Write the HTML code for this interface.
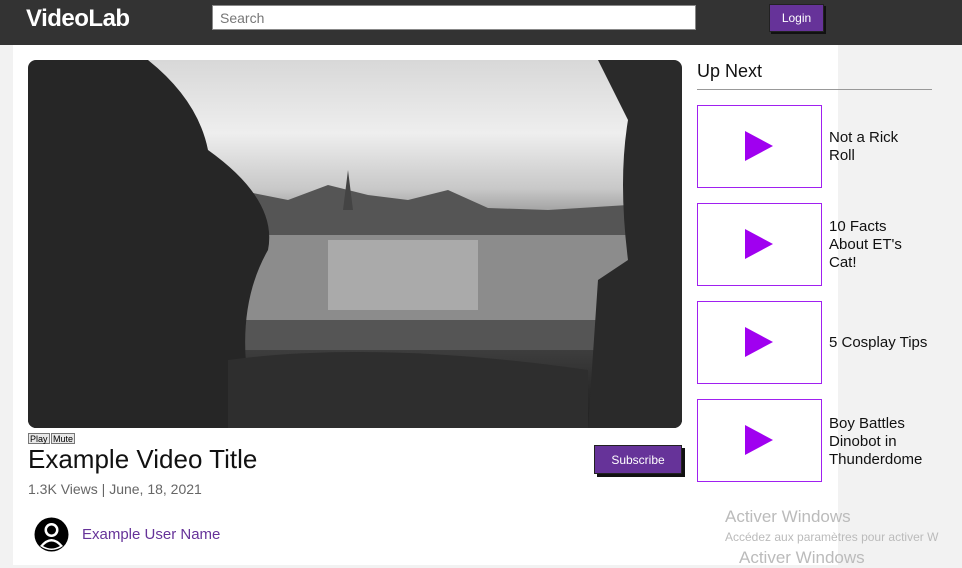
<!DOCTYPE html>
<html><head><style>
*{margin:0;padding:0;box-sizing:border-box}
body{width:962px;height:565px;overflow:hidden;background:#f2f2f2;font-family:"Liberation Sans",sans-serif;position:relative}
.hdr{position:absolute;left:0;top:0;width:962px;height:45px;background:#333}
.logo{position:absolute;left:26px;top:5px;color:#fff;font-size:24px;font-weight:bold;letter-spacing:-0.5px}
.search{position:absolute;left:212px;top:5px;width:484px;height:25px;background:#fff;border:1px solid #888;font-size:14px;color:#777;padding:4px 7px}
.login{position:absolute;left:769px;top:4px;width:55px;height:28px;background:#663399;border:1px solid #222;box-shadow:2px 2px 0 #111;color:#fff;font-size:12px;text-align:center;line-height:27px}
.main{position:absolute;left:13px;top:45px;width:825px;height:520px;background:#fff}
.vid{position:absolute;left:28px;top:60px;width:654px;height:368px;border-radius:8px;overflow:hidden;
background:linear-gradient(180deg,#d8d8d8 0%,#eee 20%,#c8c8c8 35%,#8a8a8a 45%,#6a6a6a 55%,#777 65%,#444 75%,#2a2a2a 90%,#222 100%)}
.ctl{position:absolute;top:433px;font-size:9px;border:1px solid #777;background:#e8e8e8;padding:0 1px;height:11px;line-height:10px}
.title{position:absolute;left:28px;top:444px;font-size:26px;color:#111}
.meta{position:absolute;left:28px;top:481px;font-size:14px;color:#666}
.sub{position:absolute;left:594px;top:445px;width:88px;height:29px;background:#663399;border:1px solid #222;box-shadow:3px 3px 0 #111;color:#fff;font-size:12px;text-align:center;line-height:28px}
.user{position:absolute;left:82px;top:526px;font-size:15px;color:#663399}
.upn{position:absolute;left:697px;top:61px;font-size:18px;color:#111}
.line{position:absolute;left:697px;top:89px;width:235px;height:1px;background:#999}
.th{position:absolute;left:697px;width:125px;height:83px;border:1px solid #a020f0;background:#fff}
.th:after{content:"";position:absolute;left:47px;top:25px;border-left:28px solid #a000f0;border-top:15px solid transparent;border-bottom:15px solid transparent}
.lbl{position:absolute;left:829px;font-size:15px;color:#111;line-height:18px;width:115px}
.aw{position:absolute;color:#bbb;font-size:17px}
</style></head><body>
<div class="hdr"><div class="logo">VideoLab</div><div class="search">Search</div><div class="login">Login</div></div>
<div class="main"></div>
<div class="vid">
<svg width="654" height="368" style="position:absolute;left:0;top:0">
<polygon points="150,150 210,130 260,140 300,125 340,135 380,140 420,130 460,148 520,150 600,145 654,130 654,190 150,190" fill="#555"/>
<rect x="90" y="175" width="520" height="95" fill="#8c8c8c"/>
<rect x="300" y="180" width="150" height="70" fill="#aaa"/>
<polygon points="315,150 320,110 325,150" fill="#444"/>
<rect x="90" y="260" width="520" height="30" fill="#555"/>
<path d="M0,0 L120,0 Q170,40 180,90 Q250,140 240,190 Q200,260 230,368 L0,368 Z" fill="#262626"/>
<path d="M570,0 L654,0 L654,368 L560,368 L570,220 L600,200 Q590,120 600,60 Z" fill="#2a2a2a"/>
<path d="M200,300 Q350,280 560,310 L560,368 L200,368 Z" fill="#2e2e2e"/>
</svg></div>
<div class="ctl" style="left:28px">Play</div><div class="ctl" style="left:51px">Mute</div>
<div class="title">Example Video Title</div>
<div class="meta">1.3K Views | June, 18, 2021</div>
<div class="sub">Subscribe</div>
<svg style="position:absolute;left:33px;top:516px" width="37" height="37" viewBox="0 0 37 37"><circle cx="18.5" cy="18.5" r="17" fill="#000"/><circle cx="18.5" cy="14" r="7" fill="#fff"/><path d="M7,30 Q18.5,16 30,30 Q18.5,38 7,30Z" fill="#fff"/><circle cx="18.5" cy="14" r="4.5" fill="#000"/><path d="M10,30 Q18.5,21 27,30 Q18.5,35 10,30Z" fill="#000"/></svg>
<div class="user">Example User Name</div>
<div class="upn">Up Next</div><div class="line"></div>
<div class="th" style="top:105px"></div><div class="lbl" style="top:129px">Not a Rick<br>Roll</div>
<div class="th" style="top:203px"></div><div class="lbl" style="top:218px">10 Facts<br>About ET's<br>Cat!</div>
<div class="th" style="top:301px"></div><div class="lbl" style="top:334px">5 Cosplay Tips</div>
<div class="th" style="top:399px"></div><div class="lbl" style="top:415px">Boy Battles<br>Dinobot in<br>Thunderdome</div>
<div class="aw" style="left:725px;top:507px">Activer Windows</div>
<div class="aw" style="left:725px;top:530px;font-size:12px;white-space:nowrap">Accédez aux paramètres pour activer W</div>
<div class="aw" style="left:739px;top:548px">Activer Windows</div>
</body></html>
